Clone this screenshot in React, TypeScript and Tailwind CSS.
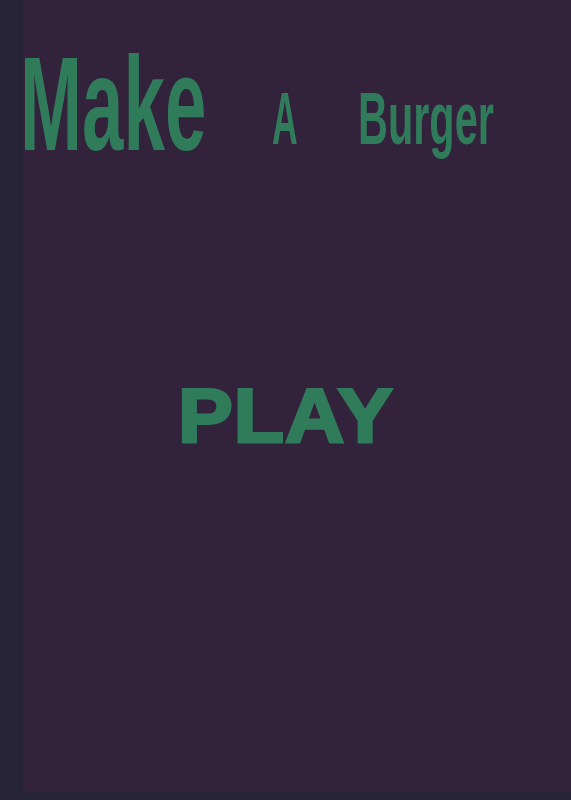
export default function App() {
  const title = { fontFamily: '"Liberation Sans", Arial, sans-serif' };
  return (
    <div className="min-h-[800px] w-full bg-[#272439] pl-[23px] pb-[8px] flex">
      <div className="flex-1 bg-[#33223b] flex flex-col items-start">
        <h1 className="flex items-end mt-[38px] ml-[-3px] text-[#2f7b5a] font-bold leading-none" style={title}>
          <span className="inline-block w-[190px] text-[133px] origin-left scale-x-[0.56] whitespace-nowrap">Make</span>
          <span className="inline-block w-[26px] ml-[62px] mb-[15px] text-[74px] origin-left scale-x-[0.48]">A</span>
          <span className="inline-block w-[134px] ml-[60px] mb-[15px] text-[74px] origin-left scale-x-[0.56] whitespace-nowrap">Burger</span>
        </h1>
        <button
          className="mt-[207px] ml-[155px] origin-left scale-x-[1.08] text-[#2f7b5a] text-[76px] font-bold leading-none tracking-[1px] [-webkit-text-stroke:3px_#2f7b5a]"
          style={{ fontFamily: '"Liberation Sans", Arial, sans-serif' }}
        >
          PLAY
        </button>
      </div>
    </div>
  );
}
